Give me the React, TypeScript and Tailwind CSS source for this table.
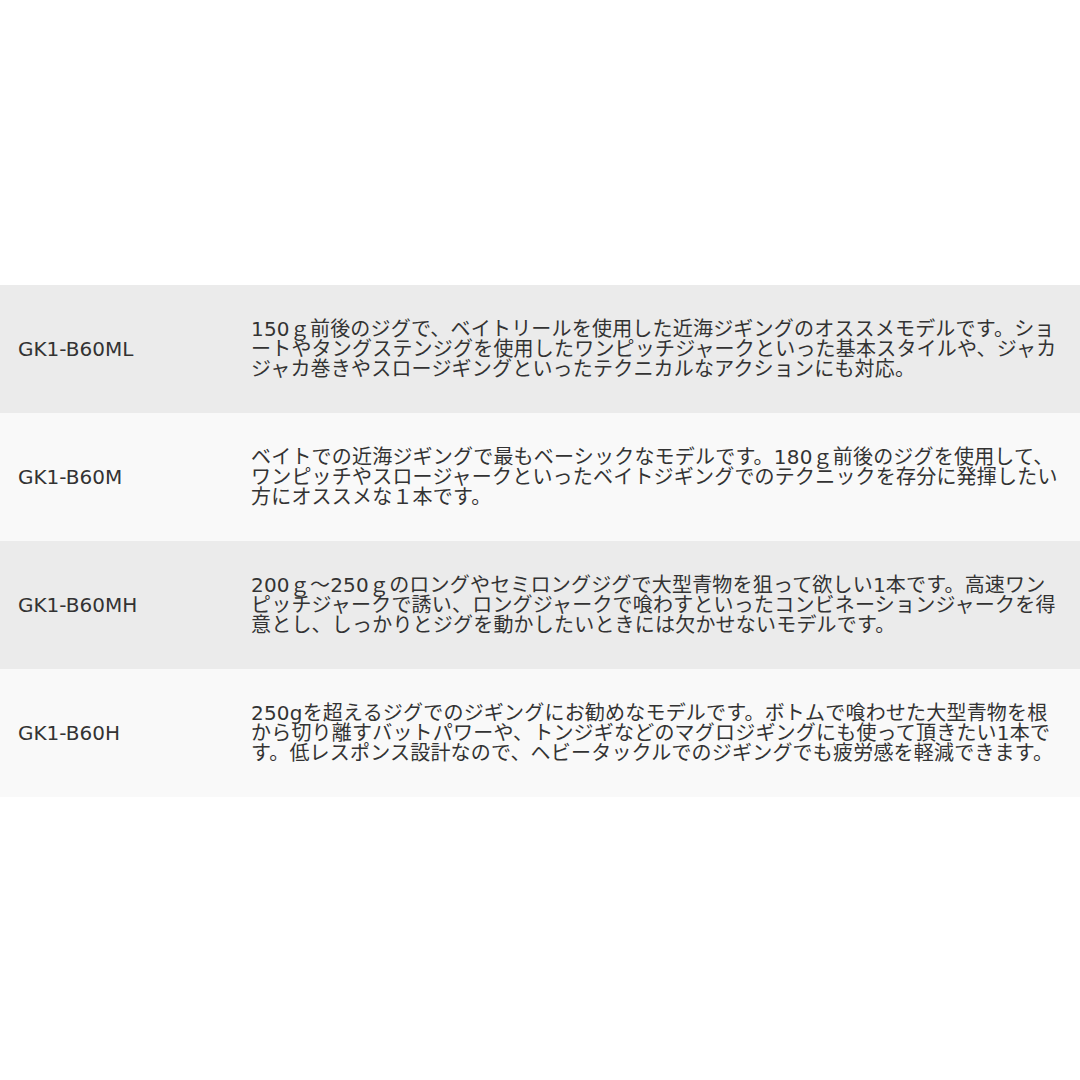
const rows = [
  {
    name: "GK1-B60ML",
    lines: [
      "150ｇ前後のジグで、ベイトリールを使用した近海ジギングのオススメモデルです。ショ",
      "ートやタングステンジグを使用したワンピッチジャークといった基本スタイルや、ジャカ",
      "ジャカ巻きやスロージギングといったテクニカルなアクションにも対応。",
    ],
  },
  {
    name: "GK1-B60M",
    lines: [
      "ベイトでの近海ジギングで最もベーシックなモデルです。180ｇ前後のジグを使用して、",
      "ワンピッチやスロージャークといったベイトジギングでのテクニックを存分に発揮したい",
      "方にオススメな１本です。",
    ],
  },
  {
    name: "GK1-B60MH",
    lines: [
      "200ｇ～250ｇのロングやセミロングジグで大型青物を狙って欲しい1本です。高速ワン",
      "ピッチジャークで誘い、ロングジャークで喰わすといったコンビネーションジャークを得",
      "意とし、しっかりとジグを動かしたいときには欠かせないモデルです。",
    ],
  },
  {
    name: "GK1-B60H",
    lines: [
      "250gを超えるジグでのジギングにお勧めなモデルです。ボトムで喰わせた大型青物を根",
      "から切り離すバットパワーや、トンジギなどのマグロジギングにも使って頂きたい1本で",
      "す。低レスポンス設計なので、ヘビータックルでのジギングでも疲労感を軽減できます。",
    ],
  },
];

export default function App() {
  return (
    <div className="w-[1080px] h-[1080px] bg-white pt-[285px] text-[#333333] font-['DejaVu_Sans','Noto_Sans_CJK_JP',sans-serif]">
      <div className="flex flex-col">
        {rows.map((row, i) => (
          <div
            key={row.name}
            className={`grid grid-cols-[251px_1fr] items-center h-[128px] ${i % 2 === 0 ? "bg-[#ebebeb]" : "bg-[#f9f9f9]"}`}
          >
            <div className="pl-[18px] text-[20px] leading-[20px]">{row.name}</div>
            <div className="text-[20px] leading-[20px] whitespace-nowrap tracking-[0.2px]">
              {row.lines.map((l, j) => (
                <div key={j}>{l}</div>
              ))}
            </div>
          </div>
        ))}
      </div>
    </div>
  );
}
